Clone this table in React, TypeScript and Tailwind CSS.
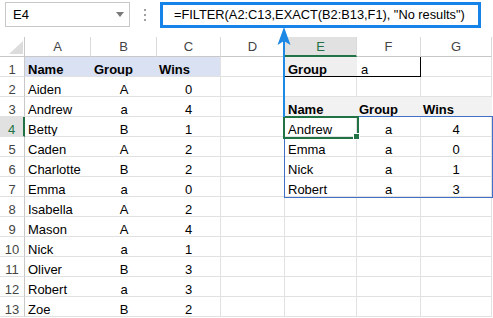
import React from 'react';

// Source table A1:C13 and the FILTER spill range E3:G7.
const SOURCE: [string, string, string][] = [
  ['Name', 'Group', 'Wins'],
  ['Aiden', 'A', '0'],
  ['Andrew', 'a', '4'],
  ['Betty', 'B', '1'],
  ['Caden', 'A', '2'],
  ['Charlotte', 'B', '2'],
  ['Emma', 'a', '0'],
  ['Isabella', 'A', '2'],
  ['Mason', 'A', '4'],
  ['Nick', 'a', '1'],
  ['Oliver', 'B', '3'],
  ['Robert', 'a', '3'],
  ['Zoe', 'B', '2'],
];

const RESULT: Record<number, [string, string, string]> = {
  3: ['Name', 'Group', 'Wins'],
  4: ['Andrew', 'a', '4'],
  5: ['Emma', 'a', '0'],
  6: ['Nick', 'a', '1'],
  7: ['Robert', 'a', '3'],
};

const LETTERS = ['A', 'B', 'C', 'D', 'E', 'F', 'G'];

interface CellProps {
  children?: React.ReactNode;
  className?: string;
}

function Cell({ children, className = '' }: CellProps) {
  return (
    <div className={`h-5 flex items-end overflow-hidden whitespace-nowrap leading-[13px] border-b border-[#e1e1e1] ${className}`}>
      {children}
    </div>
  );
}

function TopBar() {
  return (
    <div className="h-[37px] flex items-start pt-[2px] pl-[5px]">
      <div className="w-[125px] h-[25px] border border-[#c8c8c8] flex items-center justify-between pl-[7px] pr-[5px]">
        <span className="text-[13px] text-black">E4</span>
        <svg width="8" height="5" viewBox="0 0 8 5">
          <polygon points="0,0 8,0 4,5" fill="#7a7a7a" />
        </svg>
      </div>
      <div className="w-[30px] h-[25px] flex flex-col items-center justify-center gap-[3px]">
        <span className="w-[2px] h-[2px] bg-[#a0a0a0]" />
        <span className="w-[2px] h-[2px] bg-[#a0a0a0]" />
        <span className="w-[2px] h-[2px] bg-[#a0a0a0]" />
      </div>
      <div className="w-[321px] h-[26px] border-[3px] border-[#1683e8] flex items-center pl-[11px] text-[12.8px] text-black whitespace-nowrap">
        =FILTER(A2:C13,EXACT(B2:B13,F1), "No results")
      </div>
    </div>
  );
}

export default function App() {
  return (
    <div className="relative w-[493px] h-[318px] overflow-hidden bg-white font-['Liberation_Sans',Arial,sans-serif] text-[13px] text-black">
      <TopBar />

      <div className="grid grid-cols-[25px_66px_66px_64px_64px_72px_64px_71px]">
        {/* column headers */}
        <div className="h-5 relative border-r border-b border-[#c8c8c8]">
          <svg className="absolute left-[9px] top-[4px]" width="14" height="13" viewBox="0 0 14 13">
            <polygon points="14,0 14,13 0,13" fill="#dcdcdc" />
          </svg>
        </div>
        {LETTERS.map((l) => (
          <div
            key={l}
            className={`h-5 flex items-center justify-center leading-[13px] border-r border-[#dadada] ${
              l === 'E'
                ? 'bg-[#e1e1e1] text-[#217346] border-b-2 border-b-[#217346]'
                : 'text-[#444] border-b border-b-[#c8c8c8]'
            }`}
          >
            {l}
          </div>
        ))}

        {SOURCE.map((row, i) => {
          const r = i + 1;
          const head = r === 1;
          const res = RESULT[r];
          const resHead = r === 3;
          return (
            <React.Fragment key={r}>
              <Cell
                className={`justify-center ${
                  r === 4
                    ? 'bg-[#e1e1e1] text-[#217346] border-r-2 border-r-[#217346]'
                    : 'text-[#444] border-r border-r-[#c8c8c8]'
                }`}
              >
                {r}
              </Cell>
              <Cell className={`pl-[3px] ${head ? 'bg-[#d9e1f2] font-bold' : ''}`}>{row[0]}</Cell>
              <Cell className={head ? 'bg-[#d9e1f2] font-bold pl-[3px]' : 'justify-center'}>{row[1]}</Cell>
              <Cell className={`border-r border-r-[#e1e1e1] ${head ? 'bg-[#d9e1f2] font-bold pl-[2px]' : 'justify-center'}`}>
                {row[2]}
              </Cell>
              <Cell className="border-r border-r-[#e1e1e1]" />

              {r === 1 ? (
                <>
                  <Cell className="bg-[#efefef] font-bold pl-[3px] border-b-black">Group</Cell>
                  <Cell className="pl-[4px] border-r border-r-black border-b-black">a</Cell>
                  <Cell className="border-r border-r-[#e1e1e1]" />
                </>
              ) : res ? (
                <>
                  <Cell className={`pl-[3px] ${resHead ? 'bg-[#f2f2f2] font-bold' : 'border-r border-r-[#e1e1e1]'}`}>
                    {res[0]}
                  </Cell>
                  <Cell className={resHead ? 'bg-[#f2f2f2] font-bold pl-[2px]' : 'justify-center border-r border-r-[#e1e1e1]'}>
                    {res[1]}
                  </Cell>
                  <Cell className={resHead ? 'bg-[#f2f2f2] font-bold pl-[2px]' : 'justify-center border-r border-r-[#e1e1e1]'}>
                    {res[2]}
                  </Cell>
                </>
              ) : (
                <>
                  <Cell className="border-r border-r-[#e1e1e1]" />
                  <Cell className="border-r border-r-[#e1e1e1]" />
                  <Cell className="border-r border-r-[#e1e1e1]" />
                </>
              )}
            </React.Fragment>
          );
        })}
      </div>

      {/* annotation: spill range outline */}
      <div className="absolute left-[284px] top-[116px] w-[209px] h-[82px] border border-[#3f6fc6]" />

      {/* active cell E4 with fill handle */}
      <div className="absolute left-[283px] top-[116px] w-[76px] h-[23px] border-2 border-[#217346]" />
      <div className="absolute left-[353px] top-[133px] w-[7px] h-[7px] bg-[#217346] border border-white" />

      {/* annotation arrow from formula bar down to the result */}
      <svg className="absolute left-[276px] top-[26px]" width="16" height="91" viewBox="0 0 16 91">
        <rect x="7" y="14" width="2" height="77" fill="#1e88e5" />
        <polygon points="8,1 14.5,19 8,15 1.5,19" fill="#1e88e5" />
      </svg>
    </div>
  );
}
